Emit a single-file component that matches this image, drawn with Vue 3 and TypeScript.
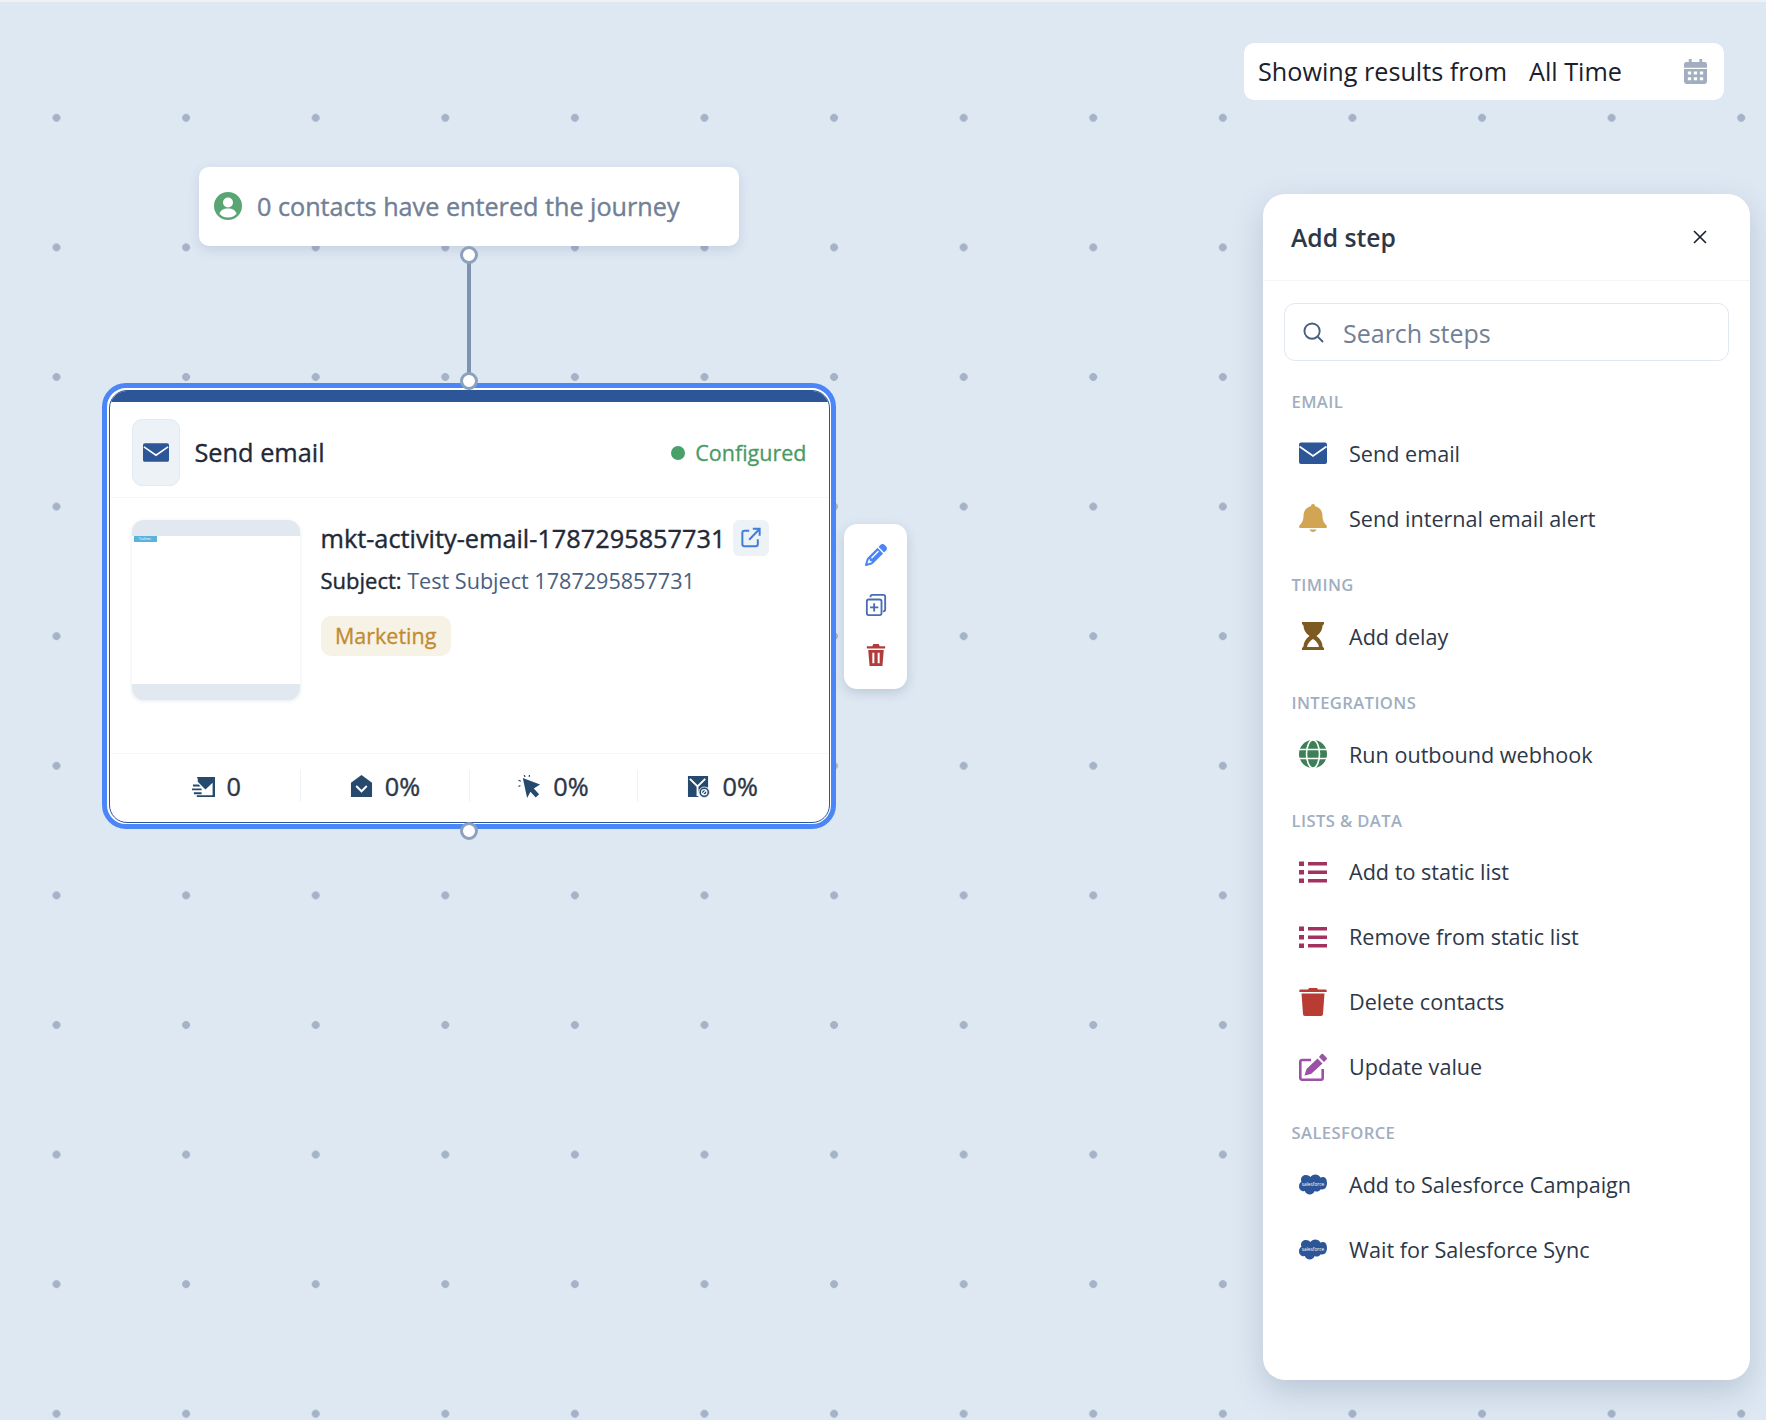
<template>
	<div class="canvas">
		<!-- results range -->
		<div class="range">
			<span class="range-label">Showing results from</span>
			<span class="range-value">All Time</span>
			<svg class="range-icon" viewBox="0 0 24 26">
				<path fill="#a0aec0" d="M5 0h3v3h8V0h3v3h2.500A2.500 2.500 0 0 1 24 5.500V9H0V5.500A2.500 2.500 0 0 1 2.500 3H5zM0 10.500h24v13a2.500 2.500 0 0 1-2.500 2.500h-19A2.500 2.500 0 0 1 0 23.500z" />
				<path fill="#fff" d="M4 13h3.500v3H4zM10.200 13h3.500v3h-3.500zM16.500 13H20v3h-3.500zM4 19h3.500v3H4zM10.200 19h3.500v3h-3.500zM16.500 19H20v3h-3.500z" />
			</svg>
		</div>

		<!-- journey entry -->
		<div class="entry">
			<svg class="entry-icon" viewBox="0 0 28 28">
				<circle cx="14" cy="14" r="14" fill="#5aa574" />
				<circle cx="14" cy="10.500" r="5" fill="#fff" />
				<path fill="#fff" d="M5.500 22c1-4 4-5.500 8.500-5.500s7.500 1.500 8.500 5.500a12 12 0 0 1-17 0z" />
			</svg>
			<span>0 contacts have entered the journey</span>
		</div>

		<div class="edge"></div>
		<span class="handle handle-a"></span>
		<span class="handle handle-b"></span>

		<!-- selected step -->
		<div class="node">
			<div class="card">
				<div class="card-bar"></div>
				<div class="card-head">
					<div class="head-icon">
						<svg viewBox="0 0 28 20" class="mail">
							<rect width="28" height="20" rx="2" fill="#2c5697" />
							<path d="M1 4l13 9 13-9" fill="none" stroke="#fff" stroke-width="1.800" />
						</svg>
					</div>
					<span class="card-title">Send email</span>
					<span class="status"><i></i>Configured</span>
				</div>
				<div class="card-body">
					<div class="thumb">
						<div class="thumb-page">
							<div class="thumb-logo">Tooltime</div>
						</div>
					</div>
					<div class="details">
						<div class="name-row">
							<span class="name">mkt-activity-email-1787295857731</span>
							<span class="open-btn">
								<svg viewBox="0 0 22 22" width="20" height="21">
									<path d="M9 3.500H3.500a2 2 0 0 0-2 2v13a2 2 0 0 0 2 2h13a2 2 0 0 0 2-2V13" fill="none" stroke="#3f7fd8" stroke-width="2.200" />
									<path d="M9 13.500L19.500 2.500M13 1.500h7.500V9" fill="none" stroke="#3f7fd8" stroke-width="2.200" />
								</svg>
							</span>
						</div>
						<div class="subject"><b>Subject:</b> Test Subject 1787295857731</div>
						<span class="tag">Marketing</span>
					</div>
				</div>
				<div class="stats">
					<div v-for="s in stats" :key="s.id" class="stat">
						<svg class="stat-icon" viewBox="0 0 24 24">
							<template v-if="s.id === 'sent'">
								<path fill="#264a6e" d="M5 2h19v21H5v-2h16.500V8L14 15 6 7V4z" />
								<path fill="#264a6e" d="M1 10h6l2 2H1zM0 14h10v2H0zM2 18h8v2H2z" />
							</template>
							<template v-else-if="s.id === 'open'">
								<path fill="#264a6e" d="M12 0l11 8v15H1V8z" />
								<path d="M6.500 11.500l5.500 5.500 5.500-5.500" fill="none" stroke="#fff" stroke-width="2" />
							</template>
							<template v-else-if="s.id === 'click'">
								<path fill="#264a6e" d="M5 3l18 7-6.500 4 5.500 6-3.500 3.500-5.500-6L9.500 24z" />
								<path d="M6.500 0l.8 2M12 0l-.4 2M0.500 5.500l2.500 1M0.500 12l2-1" stroke="#264a6e" stroke-width="1.300" fill="none" />
							</template>
							<template v-else>
								<path fill="#264a6e" d="M1 1h21v12h-4a7 7 0 0 0-6 10H1z" />
								<path d="M3 4l8 8 8-8M11 12v10" fill="none" stroke="#fff" stroke-width="2" />
								<circle cx="18" cy="18" r="5.500" fill="#264a6e" stroke="#fff" stroke-width="0.800" />
								<circle cx="18" cy="18" r="2.800" fill="none" stroke="#fff" stroke-width="1.200" />
								<path d="M15.800 20.200l4.400-4.400" stroke="#fff" stroke-width="1.200" />
							</template>
						</svg>
						<span>{{ s.value }}</span>
					</div>
				</div>
			</div>
		</div>
		<span class="handle handle-top"></span>

		<!-- hover actions -->
		<div class="actions">
			<svg viewBox="0 0 512 512">
				<path fill="#4a86f7" d="M410.300 231l11.300-11.300-33.900-33.900-62.100-62.100L291.700 89.800l-11.300 11.300-22.600 22.600L58.600 322.900c-10.400 10.400-18 23.300-22.200 37.400L1 480.700c-2.500 8.400-.2 17.500 6.100 23.700s15.300 8.500 23.700 6.100l120.300-35.400c14.100-4.200 27-11.800 37.400-22.200L387.700 253.700 410.300 231zM160 399.400l-9.100 22.700c-4 3.100-8.500 5.400-13.300 6.900L59.400 452l23-78.100c1.400-4.900 3.800-9.400 6.900-13.300l22.700-9.100v32c0 8.800 7.200 16 16 16h32zM362.700 18.700L348.300 33.200 325.700 55.800 314.300 67.100l33.900 33.900 62.100 62.100 33.900 33.900 11.300-11.300 22.600-22.600 14.500-14.500c25-25 25-65.500 0-90.500L453.300 18.700c-25-25-65.500-25-90.500 0zm-47.400 168l-144 144c-6.200 6.200-16.400 6.200-22.600 0s-6.200-16.400 0-22.600l144-144c6.200-6.200 16.400-6.200 22.600 0s6.200 16.400 0 22.600z" />
			</svg>
			<svg viewBox="0 0 24 24">
				<path fill="none" stroke="#4a6cb5" stroke-width="2" d="M6 3.500V3a2 2 0 0 1 2-2h12a2 2 0 0 1 2 2v14a2 2 0 0 1-2 2h-.5" />
				<rect x="2" y="6" width="16" height="17" rx="2" fill="none" stroke="#4a6cb5" stroke-width="2" />
				<path d="M10 10v9M5.500 14.500h9" stroke="#4a6cb5" stroke-width="2" />
			</svg>
			<svg viewBox="0 0 24 24">
				<path fill="#b23c3c" d="M9 0h6l1 2.500h6V5H2V2.500h6zM3.500 6.500h17L19 24H5zM8 9.500V21h2.200V9.500zM13.800 9.500V21H16V9.500z" />
			</svg>
		</div>

		<!-- step picker -->
		<aside class="panel">
			<div class="panel-head">
				<span class="panel-title">Add step</span>
				<svg class="close" viewBox="0 0 14 14">
					<path d="M1 1l12 12M13 1L1 13" stroke="#1a202c" stroke-width="1.600" fill="none" />
				</svg>
			</div>
			<div class="search">
				<svg viewBox="0 0 22 22" class="search-icon">
					<circle cx="9.500" cy="9.500" r="8" fill="none" stroke="#4a5f80" stroke-width="2" />
					<path d="M15.500 15.500l5.500 5.500" stroke="#4a5f80" stroke-width="2" />
				</svg>
				<span>Search steps</span>
			</div>
			<section v-for="group in groups" :key="group.title" class="group">
				<h4>{{ group.title }}</h4>
				<div v-for="row in group.rows" :key="row.label" class="row">
					<svg class="row-icon" viewBox="0 0 28 28">
						<template v-if="row.icon === 'mail'">
							<rect y="3.500" width="28" height="21.500" rx="2" fill="#2c5697" />
							<path d="M0.500 7.500L14 17 27.500 7.500" fill="none" stroke="#fff" stroke-width="1.800" />
						</template>
						<template v-else-if="row.icon === 'bell'">
							<path fill="#d1a553" d="M14 0a2 2 0 0 1 2 2.200c5 1 7.500 5 7.500 9.800 0 4.500 1.500 7 4 9.500.8 1 .4 2.500-1 2.500H1.500c-1.400 0-1.800-1.500-1-2.500 2.500-2.500 4-5 4-9.500 0-4.800 2.500-8.800 7.500-9.800A2 2 0 0 1 14 0z" />
							<path fill="#d1a553" d="M10.500 25.500h7c-.4 1.500-1.900 2.500-3.500 2.500s-3.100-1-3.500-2.500z" />
						</template>
						<template v-else-if="row.icon === 'delay'">
							<path fill="#7d5a20" d="M3 0h22v2l-1.500 1.500c0 4-2 7.500-6 10.500 4 3 6 6.500 6 10.500L25 26v2H3v-2l1.500-1.500c0-4 2-7.500 6-10.500-4-3-6-6.500-6-10.500L3 2z" />
							<path fill="#fff" d="M8 25c.5-3.500 3-6 6-8 3 2 5.500 4.500 6 8z" />
						</template>
						<template v-else-if="row.icon === 'globe'">
							<circle cx="14" cy="14" r="14" fill="#3d7f57" />
							<path d="M0 9.500h28M0 18.500h28" stroke="#fff" stroke-width="1.600" />
							<ellipse cx="14" cy="14" rx="6.500" ry="14" fill="none" stroke="#fff" stroke-width="1.600" />
						</template>
						<template v-else-if="row.icon === 'list'">
							<path fill="#a2335f" d="M0 3.500h5v4.500H0zM9 4h19v3.500H9zM0 12h5v4.500H0zM9 12.500h19V16H9zM0 20.500h5V25H0zM9 21h19v3.500H9z" />
						</template>
						<template v-else-if="row.icon === 'trash'">
							<path fill="#b83c33" d="M10 0h8l1 1.500h7.500a1.200 1.200 0 0 1 1.200 1.200V4H0.300V2.700a1.200 1.200 0 0 1 1.200-1.200H9zM2.500 5.500h23L24 26a2 2 0 0 1-2 2H6a2 2 0 0 1-2-2z" />
						</template>
						<template v-else-if="row.icon === 'edit'">
							<path fill="none" stroke="#9a52a4" stroke-width="2.600" stroke-linejoin="round" d="M12 7H3a1.700 1.700 0 0 0-1.700 1.700V25a1.700 1.700 0 0 0 1.700 1.700h19A1.700 1.700 0 0 0 23.700 25V16" />
							<path fill="#9a52a4" d="M24 1l3.500 3.500a1.500 1.500 0 0 1 0 2L25 9l-5-5 2-2.500a1.500 1.500 0 0 1 2-.5zM18.500 5.500l5 5L12 21l-6.500 1.500L7.500 16z" />
						</template>
						<template v-else>
							<path fill="#2c5697" d="M11.500 6c1-1.500 2.800-2.500 4.700-2.500 2.300 0 4.200 1.200 5.200 3 .9-.4 1.700-.6 2.600-.6 2.200 0 4 2 4 6.100 0 3.700-1.900 6.500-4.800 6.500-.5 0-1-.1-1.500-.3-.9 1.500-2.400 2.300-4 2.300-.7 0-1.400-.1-2-.5-.9 2.100-2.700 3.500-4.900 3.500-2.300 0-4.200-1.400-5-3.400-.4.100-.7.100-1.100.1C2 20.200 0 18 0 15.200c0-1.900 1-3.500 2.400-4.400-.3-.6-.4-1.400-.4-2.100C2 6 4.200 4 7 4c1.800 0 3.400.800 4.500 2z" />
							<text x="14" y="14.500" text-anchor="middle" font-size="4.800" fill="#fff" font-family="'Open Sans', sans-serif">salesforce</text>
						</template>
					</svg>
					<span>{{ row.label }}</span>
				</div>
			</section>
		</aside>
	</div>
</template>

<script setup lang="ts">
interface Row {
	label: string
	icon: string
}

const stats = [
	{ id: 'sent', value: '0' },
	{ id: 'open', value: '0%' },
	{ id: 'click', value: '0%' },
	{ id: 'bounce', value: '0%' }
]

const groups: { title: string; rows: Row[] }[] = [
	{
		title: 'EMAIL',
		rows: [
			{ label: 'Send email', icon: 'mail' },
			{ label: 'Send internal email alert', icon: 'bell' }
		]
	},
	{ title: 'TIMING', rows: [{ label: 'Add delay', icon: 'delay' }] },
	{ title: 'INTEGRATIONS', rows: [{ label: 'Run outbound webhook', icon: 'globe' }] },
	{
		title: 'LISTS & DATA',
		rows: [
			{ label: 'Add to static list', icon: 'list' },
			{ label: 'Remove from static list', icon: 'list' },
			{ label: 'Delete contacts', icon: 'trash' },
			{ label: 'Update value', icon: 'edit' }
		]
	},
	{
		title: 'SALESFORCE',
		rows: [
			{ label: 'Add to Salesforce Campaign', icon: 'cloud' },
			{ label: 'Wait for Salesforce Sync', icon: 'cloud' }
		]
	}
]
</script>

<style>
html,
body {
	margin: 0;
	background: #dee8f3;
}
</style>

<style scoped>
* {
	box-sizing: border-box;
}

.canvas {
	position: relative;
	width: 1766px;
	height: 1420px;
	overflow: hidden;
	font-family: "Open Sans", sans-serif;
	color: #2d3748;
	background-color: #dee8f3;
	background-image: radial-gradient(circle at center, #a5b3c8 3.6px, transparent 4.2px);
	background-size: 129.6px 129.6px;
	background-position: -8.3px 51px;
	border-top: 2px solid #eef2f6;
}

.range {
	position: absolute;
	left: 1244px;
	top: 41px;
	width: 480px;
	height: 57px;
	display: flex;
	align-items: center;
	padding: 0 17px 0 14px;
	background: #fff;
	border-radius: 10px;
	font-size: 25.200px;
	color: #1a202c;
}

.range span {
	margin-top: -2px;
}

.range-value {
	margin-left: 22px;
}

.range-icon {
	margin-left: auto;
	width: 23px;
	height: 25px;
}

.entry {
	position: absolute;
	left: 199px;
	top: 165px;
	width: 540px;
	height: 79px;
	display: flex;
	align-items: center;
	gap: 15px;
	padding: 0 0 2px 15px;
	background: #fff;
	border-radius: 10px;
	box-shadow: 0 4px 12px rgba(60, 80, 110, 0.14);
	font-size: 25.200px;
	color: #718096;
	-webkit-text-stroke: 0.4px #718096;
}

.entry span {
	margin-top: 1px;
}

.entry-icon {
	width: 28px;
	height: 28px;
}

.edge {
	position: absolute;
	left: 467px;
	top: 258px;
	width: 4px;
	height: 118px;
	background: #7f93ae;
}

.handle {
	position: absolute;
	width: 18px;
	height: 18px;
	border-radius: 50%;
	background: #fff;
	border: 3px solid #8da0bc;
	z-index: 3;
}

.handle-a {
	left: 460px;
	top: 244px;
}

.handle-b {
	left: 460px;
	top: 820px;
}

.handle-top {
	left: 460px;
	top: 370px;
}

.node {
	position: absolute;
	left: 102px;
	top: 381px;
	width: 734px;
	height: 446px;
	padding: 1.500px;
	background: #fff;
	border: 5px solid #4a86f7;
	border-radius: 24px;
	z-index: 2;
}

.card {
	display: flex;
	flex-direction: column;
	height: 100%;
	border: 1px solid #2c5697;
	border-radius: 18px;
	overflow: hidden;
	background: #fff;
}

.card-bar {
	flex: none;
	height: 11px;
	background: #2c5697;
}

.card-head {
	flex: none;
	height: 96px;
	display: flex;
	align-items: center;
	padding: 7px 22px 0;
	border-bottom: 1px solid #f2f5f9;
}

.head-icon {
	width: 48px;
	height: 67px;
	display: flex;
	align-items: center;
	justify-content: center;
	background: #edf2f7;
	border: 1px solid #e2e8f0;
	border-radius: 10px;
}

.mail {
	width: 26px;
	height: 19px;
}

.card-title {
	margin: -2px 0 0 15px;
	font-size: 25.300px;
	color: #1f2937;
	-webkit-text-stroke: 0.35px #1f2937;
}

.status {
	margin-left: auto;
	display: flex;
	align-items: center;
	gap: 10px;
	font-size: 21.500px;
	color: #4a9a64;
	-webkit-text-stroke: 0.3px #4a9a64;
}

.status i {
	width: 14px;
	height: 14px;
	border-radius: 50%;
	background: #48a06a;
}

.card-body {
	flex: 1;
	display: flex;
	gap: 21px;
	padding: 22px 22px 0;
}

.thumb {
	flex: none;
	width: 168px;
	height: 180px;
	padding: 16px 0;
	background: #e2e8f0;
	border-radius: 12px;
	box-shadow: 0 1px 4px rgba(60, 80, 110, 0.12);
}

.thumb-page {
	height: 100%;
	background: #fff;
}

.thumb-logo {
	width: 23px;
	height: 6px;
	margin-left: 2px;
	background: #5bb3dd;
	color: #fff;
	font-size: 3px;
	line-height: 6px;
	text-align: center;
}

.details {
	flex: 1;
	min-width: 0;
}

.name-row {
	display: flex;
	align-items: center;
	gap: 8px;
	height: 36px;
}

.name {
	font-size: 25.300px;
	color: #1f2937;
	white-space: nowrap;
	-webkit-text-stroke: 0.4px #1f2937;
}

.open-btn {
	width: 36px;
	height: 36px;
	display: flex;
	align-items: center;
	justify-content: center;
	background: #edf2f7;
	border-radius: 6px;
}

.subject {
	margin-top: 9px;
	font-size: 21.600px;
	line-height: 30px;
	color: #4a5f80;
}

.subject b {
	font-weight: 400;
	font-size: 22px;
	color: #1f2937;
	-webkit-text-stroke: 0.4px #1f2937;
}

.tag {
	display: inline-block;
	margin-top: 20px;
	height: 40px;
	padding: 0 14.500px;
	line-height: 40px;
	background: #f7f2e6;
	border-radius: 10px;
	font-size: 21.500px;
	color: #c28a2e;
	-webkit-text-stroke: 0.3px #c28a2e;
}

.stats {
	flex: none;
	height: 69px;
	display: grid;
	grid-template-columns: repeat(4, 1fr);
	align-items: center;
	padding: 0 21.500px 3px 23px;
	border-top: 1px solid #f2f5f9;
}

.stat {
	height: 32px;
	display: flex;
	align-items: center;
	justify-content: center;
	gap: 12px;
	font-size: 25.300px;
	color: #2d3748;
	border-right: 1px solid #edf2f7;
	-webkit-text-stroke: 0.4px #2d3748;
}

.stat:last-child {
	border-right: none;
}

.stat-icon {
	width: 23px;
	height: 23px;
}

.actions {
	position: absolute;
	left: 844px;
	top: 522px;
	width: 63px;
	height: 165px;
	display: flex;
	flex-direction: column;
	align-items: center;
	justify-content: center;
	gap: 28px;
	padding-bottom: 4px;
	background: #fff;
	border-radius: 13px;
	box-shadow: 0 4px 12px rgba(60, 80, 110, 0.2);
}

.actions svg {
	width: 22px;
	height: 22px;
}

.panel {
	position: absolute;
	left: 1263px;
	top: 192px;
	width: 487px;
	height: 1186px;
	background: #fff;
	border-radius: 22px;
	box-shadow: 0 12px 32px rgba(60, 80, 110, 0.22);
}

.panel-head {
	height: 87px;
	display: flex;
	align-items: center;
	justify-content: space-between;
	padding: 0 43px 0 28px;
	border-bottom: 1px solid #f2f5f9;
}

.panel-title {
	font-size: 24.700px;
	font-weight: 600;
	color: #2d3748;
}

.close {
	width: 14px;
	height: 14px;
}

.search {
	height: 58px;
	margin: 22px 21px 31px;
	display: flex;
	align-items: center;
	gap: 19px;
	padding-left: 18px;
	border: 1px solid #e2e8f0;
	border-radius: 11px;
	font-size: 25px;
	color: #718096;
}

.search-icon {
	flex: none;
	width: 21px;
	height: 21px;
}

.search span {
	margin-top: 2px;
}

.group {
	margin-bottom: 24.500px;
}

.group h4 {
	margin: 0 0 8.500px 28.500px;
	height: 20px;
	line-height: 20px;
	font-size: 16.600px;
	font-weight: 600;
	letter-spacing: 0.4px;
	color: #a0aec0;
}

.group:nth-of-type(4) {
	margin-bottom: 23.500px;
}

.group:nth-of-type(4) h4 {
	margin-bottom: 8px;
}

.group:nth-of-type(5) h4 {
	margin-bottom: 9.500px;
}

.row {
	height: 65px;
	display: flex;
	align-items: center;
	gap: 22px;
	padding-left: 36px;
	font-size: 21.600px;
	color: #2d3748;
}

.row-icon {
	flex: none;
	width: 28px;
	height: 28px;
}
</style>
